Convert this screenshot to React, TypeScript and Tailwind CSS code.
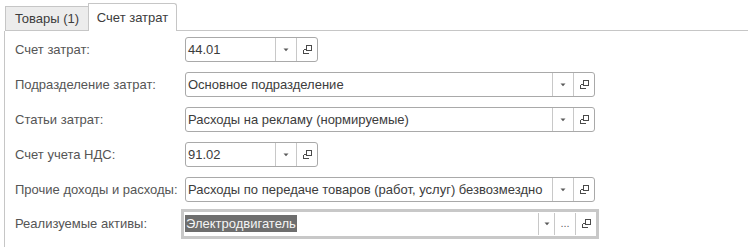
import React from "react";

const OpenIcon = () => (
  <svg width="12" height="12" viewBox="0 0 12 12" fill="none" stroke="#4a4a4a" strokeWidth="1" shapeRendering="crispEdges">
    <rect x="5.5" y="1.5" width="5" height="5" />
    <path d="M2.5 5.5 V9.5 H7.5" />
    <path d="M2.5 5.5 H5" />
  </svg>
);

const Arrow = () => (
  <svg width="6" height="4" viewBox="0 0 6 4">
    <path d="M0.5 0.5 H5.5 L3 3.2 Z" fill="#5a5a5a" />
  </svg>
);

type FieldProps = { value: string; width: string };

const Field = ({ value, width }: FieldProps) => (
  <div className={`flex h-[25px] ${width} rounded-[3px] border border-[#a9a9a9] bg-white`}>
    <div className="flex-1 min-w-0 flex items-center pl-[2px] text-[13px] text-[#3c3c3c] whitespace-nowrap overflow-hidden">
      {value}
    </div>
    <div className="w-[21px] flex items-center justify-center border-l border-[#c8c8c8]">
      <Arrow />
    </div>
    <div className="w-[21px] flex items-center justify-center border-l border-[#c8c8c8]">
      <OpenIcon />
    </div>
  </div>
);

const rows: { label: string; value: string; width: string }[] = [
  { label: "Счет затрат:", value: "44.01", width: "w-[133px]" },
  { label: "Подразделение затрат:", value: "Основное подразделение", width: "w-[410px]" },
  { label: "Статьи затрат:", value: "Расходы на рекламу (нормируемые)", width: "w-[410px]" },
  { label: "Счет учета НДС:", value: "91.02", width: "w-[133px]" },
  {
    label: "Прочие доходы и расходы:",
    value: "Расходы по передаче товаров (работ, услуг) безвозмездно",
    width: "w-[410px]",
  },
];

export default function App() {
  return (
    <div className="w-[748px] h-[247px] bg-white overflow-hidden pt-[3px] pl-[4px] font-['Liberation_Sans',Arial,sans-serif]">
      <div className="flex items-end h-[28px]">
        <div className="h-[25px] w-[83px] ml-[1px] bg-[#ececec] border-t border-l border-b border-[#c6c6c6] flex items-center justify-center text-[13px] text-[#3c3c3c]">
          Товары (1)
        </div>
        <div className="h-[28px] w-[89px] bg-white border-t border-l border-r border-[#c6c6c6] rounded-tr-[3px] flex items-center justify-center text-[13px] text-[#3c3c3c]">
          Счет затрат
        </div>
        <div className="flex-1 h-px bg-[#c6c6c6]" />
      </div>
      <div className="h-[216px] border-l border-[#c6c6c6] pl-[10px] pt-[6px] flex flex-col gap-[10px]">
        {rows.map((r) => (
          <div key={r.label} className="flex items-center h-[25px]">
            <div className="w-[170px] text-[13px] text-[#555] whitespace-nowrap">{r.label}</div>
            <Field value={r.value} width={r.width} />
          </div>
        ))}
        <div className="flex items-center h-[25px] mt-[-1px]">
          <div className="w-[166px] text-[13px] text-[#555] whitespace-nowrap">Реализуемые активы:</div>
          <div className="w-[418px] h-[30px] border-[3px] border-[#c8c8c8] flex bg-white">
            <div className="flex-1 flex items-center pl-[1px]">
              <span className="bg-[#6e6e6e] text-[#f4f4f4] text-[13px] leading-[17px] px-[1px]">Электродвигатель</span>
            </div>
            <div className="w-[16px] flex items-center justify-center border-l border-[#c8c8c8] my-[1px]">
              <Arrow />
            </div>
            <div className="w-[21px] flex items-end justify-center pb-[6px] border-l border-[#c8c8c8] my-[1px] text-[11px] text-[#666] leading-none">
              ...
            </div>
            <div className="w-[21px] flex items-center justify-center border-l border-[#c8c8c8] my-[1px]">
              <OpenIcon />
            </div>
          </div>
        </div>
      </div>
    </div>
  );
}
